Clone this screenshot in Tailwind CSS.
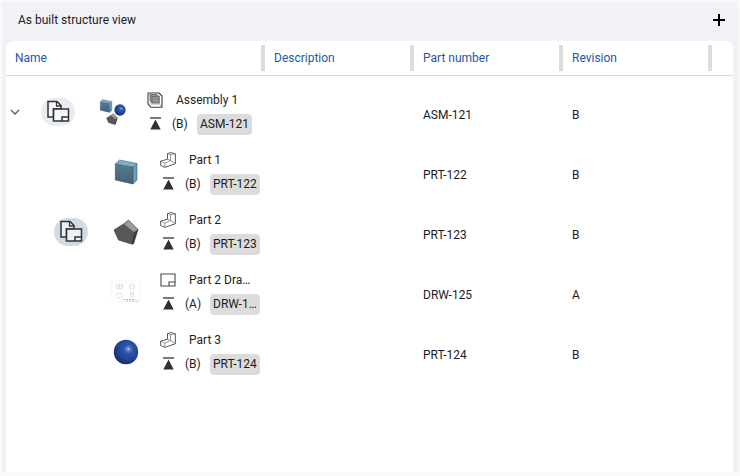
<!DOCTYPE html>
<html lang="en">
<head>
<meta charset="utf-8">
<meta name="viewport" content="width=device-width, initial-scale=1">
<title>As built structure view</title>
<script src="https://cdn.jsdelivr.net/npm/@tailwindcss/browser@4"></script>
</head>
<body class="bg-[#fafafc] font-[Roboto,sans-serif] text-xs leading-5 text-[#1c1c1e]">

<svg class="absolute size-0" aria-hidden="true">
  <defs>
    <linearGradient id="steel" x1="0" y1="0" x2="0" y2="1"><stop offset="0" stop-color="#527d91"/><stop offset="1" stop-color="#456475"/></linearGradient>
    <radialGradient id="ball" cx=".6" cy=".38" r=".65"><stop offset="0" stop-color="#c4d4f5"/><stop offset=".12" stop-color="#5a7cc8"/><stop offset=".3" stop-color="#2c52a6"/><stop offset=".65" stop-color="#234495"/><stop offset="1" stop-color="#14285c"/></radialGradient>
  </defs>
  <symbol id="copy" viewBox="0 0 24 24">
    <path d="M7.500 17H2V1.500h9l4 4V9H7.500z" fill="#fff" fill-opacity=".6" stroke="#303236" stroke-width="1.500"/>
    <path d="M10.500 1.500V6H15" fill="none" stroke="#303236" stroke-width="1.300"/>
    <path d="M7.500 9h15v12h-15z" fill="#fff" fill-opacity=".6" stroke="#303236" stroke-width="1.500"/>
    <path d="M16 21v-4h6.500" fill="none" stroke="#303236" stroke-width="1.500"/>
  </symbol>
  <symbol id="latest" viewBox="0 0 14 14">
    <path d="M2 1h11" stroke="#303033" stroke-width="1.300"/>
    <path d="M7.500 2.600 12.700 12.600H2.300z" fill="#303033"/>
  </symbol>
  <symbol id="assembly" viewBox="0 0 16 16">
    <path d="M1 1h11l3 3v11.300H4L1 12z" fill="#fff" stroke="#3c3c3e" stroke-width="1.100" stroke-linejoin="round"/>
    <path d="M1.500 12h11M12.500 12 15 15M12.500 3.500V12" stroke="#7a7a7c" stroke-width=".6" fill="none"/>
    <path d="M3 2.500h7l2 2V11H5L3 9z" fill="#929294" stroke="#4a4a4c" stroke-width=".6"/>
    <path d="M3 2.500l2 2h7M5 4.500V11" stroke="#5a5a5c" stroke-width=".6" fill="none"/>
  </symbol>
  <symbol id="part" viewBox="0 0 16 16">
    <path d="M7.500 1.500 11 .6l4.400 1.200v9.900L4.800 15.400.6 13.300V9.200l6.900-2z" fill="#fff" stroke="#48484a" stroke-width=".9" stroke-linejoin="round"/>
    <path d="M7.500 1.500l3 1.200 4.900-.9M10.500 2.700v5.800L4.800 11.200.6 9.200M4.800 11.200v4.200M7.500 7.200l3 1.300 4.900 3" fill="none" stroke="#6a6a6c" stroke-width=".7" stroke-linejoin="round"/>
  </symbol>
  <symbol id="drawing" viewBox="0 0 16 16">
    <path d="M1 2h14v12H1zM9 14V10h6" fill="none" stroke="#48484a" stroke-width="1.100"/>
  </symbol>
  <symbol id="block" viewBox="0 0 26 26">
    <path d="M20 8l4-3.500V21l-4 4z" fill="#6b9fbd"/>
    <path d="M2.300 5 6.500 1 24 4.500 20 8z" fill="#7db0cc"/>
    <path d="M2.300 5 20 8v17L2.300 21z" fill="url(#steel)"/>
    <path d="M2.300 5 6.500 1 24 4.500V21l-4 4L2.300 21zM2.300 5 20 8l4-3.500M20 8v17" fill="none" stroke="#2b4350" stroke-width=".5"/>
  </symbol>
  <symbol id="penta" viewBox="0 0 26 26">
    <path d="M1 11 10.500 5 21 13.500 18.500 25 5.500 21z" fill="#585858"/>
    <path d="M10.500 5 15.500 1 25 10.500l-4 3z" fill="#9a9a9a"/>
    <path d="M21 13.500l4-3L20.500 25h-2z" fill="#3c3c3c"/>
    <path d="M1 11 10.500 5l5-4L25 10.500 20.500 25h-2l-13-4zM10.500 5 21 13.500l4-3M21 13.500 18.500 25" fill="none" stroke="#303030" stroke-width=".6"/>
  </symbol>
  <symbol id="sphere" viewBox="0 0 26 26"><circle cx="13" cy="13" r="12.200" fill="url(#ball)"/></symbol>
</svg>

<main class="mx-0.5 mt-0.5 mb-1 flex min-h-[calc(100vh-6px)] flex-col bg-[#f2f1f6] px-1">
  <header class="flex h-[39px] shrink-0 items-center justify-between pr-[7px] pb-1 pl-3">
    <h1>As built structure view</h1>
    <button type="button" aria-label="Add" class="flex size-4 items-center justify-center">
      <svg class="size-3" viewBox="0 0 12 12" fill="none" stroke="#000" stroke-width="2"><path d="M6 0v12M0 6h12"/></svg>
    </button>
  </header>

  <section class="mr-px grow rounded-t-lg bg-white">
    <table class="w-full table-fixed border-separate border-spacing-0 text-left">
      <colgroup><col class="w-[259px]"><col class="w-[149px]"><col class="w-[149px]"><col class="w-[149px]"><col></colgroup>
      <thead class="text-[#27569b]">
        <tr>
          <th class="h-[35px] border-b border-[#d8d8da] p-0 pl-[9px] font-normal"><div class="flex items-center justify-between">Name<span class="h-[26px] w-1 bg-[#dcdcdc]"></span></div></th>
          <th class="border-b border-[#d8d8da] p-0 pl-[9px] font-normal"><div class="flex items-center justify-between">Description<span class="h-[26px] w-1 bg-[#dcdcdc]"></span></div></th>
          <th class="border-b border-[#d8d8da] p-0 pl-[9px] font-normal"><div class="flex items-center justify-between">Part number<span class="h-[26px] w-1 bg-[#dcdcdc]"></span></div></th>
          <th class="border-b border-[#d8d8da] p-0 pl-[9px] font-normal"><div class="flex items-center justify-between">Revision<span class="h-[26px] w-1 bg-[#dcdcdc]"></span></div></th>
          <td class="border-b border-[#d8d8da] p-0"></td>
        </tr>
      </thead>
      <tbody>
        <tr><td colspan="5" class="h-[9px] p-0"></td></tr>
        <tr class="h-[60px]">
          <td class="p-0 align-top">
            <div class="flex h-[54px] items-center pl-1">
              <button type="button" aria-label="Collapse Assembly 1" class="mr-[21px] flex w-[10px] justify-center"><svg class="h-[10px] w-[10px]" viewBox="0 0 10 10" fill="none" stroke="#55585c" stroke-width="1.300"><path d="M1 3l4 4 4-4"/></svg></button>
              <button type="button" aria-label="Copy Assembly 1" class="flex h-7 w-[34px] items-center justify-center rounded-full bg-[#e9edf2]"><svg class="size-6"><use href="#copy"/></svg></button>
              <svg class="ml-6 h-[26px] w-7" viewBox="0 0 28 26">
                <use href="#block" x="0" y="0" width="14" height="14"/>
                <use href="#penta" x="7" y="14" width="12" height="12"/>
                <use href="#sphere" x="15" y="5" width="12" height="12"/>
              </svg>
              <div class="ml-5 flex flex-col gap-1">
                <div class="flex items-center gap-[13px]"><svg class="size-4"><use href="#assembly"/></svg><span>Assembly 1</span></div>
                <div class="flex items-center gap-[9px]"><svg class="mr-px ml-px size-[14px]"><use href="#latest"/></svg><span class="w-4">(B)</span><span class="h-[21px] rounded-sm bg-[#dcdcdc] px-[3px]">ASM-121</span></div>
              </div>
            </div>
          </td>
          <td class="p-0 pl-[9px]"></td><td class="p-0 pl-[9px]">ASM-121</td><td class="p-0 pl-[9px]">B</td><td></td>
        </tr>
        <tr class="h-[60px]">
          <td class="p-0 align-top">
            <div class="flex h-[54px] items-center pl-[107px]">
              <svg class="size-[26px]"><use href="#block"/></svg>
              <div class="ml-[21px] flex flex-col gap-1">
                <div class="flex items-center gap-[13px]"><svg class="size-4"><use href="#part"/></svg><span>Part 1</span></div>
                <div class="flex items-center gap-[9px]"><svg class="mr-px ml-px size-[14px]"><use href="#latest"/></svg><span class="w-4">(B)</span><span class="h-[21px] rounded-sm bg-[#dcdcdc] px-[3px]">PRT-122</span></div>
              </div>
            </div>
          </td>
          <td class="p-0 pl-[9px]"></td><td class="p-0 pl-[9px]">PRT-122</td><td class="p-0 pl-[9px]">B</td><td></td>
        </tr>
        <tr class="h-[60px]">
          <td class="p-0 align-top">
            <div class="flex h-[54px] items-center pl-12">
              <button type="button" aria-label="Copy Part 2" class="mr-[25px] flex h-7 w-[34px] items-center justify-center rounded-full bg-[#cfdbe5]"><svg class="size-6"><use href="#copy"/></svg></button>
              <svg class="size-[26px]"><use href="#penta"/></svg>
              <div class="ml-[21px] flex flex-col gap-1">
                <div class="flex items-center gap-[13px]"><svg class="size-4"><use href="#part"/></svg><span>Part 2</span></div>
                <div class="flex items-center gap-[9px]"><svg class="mr-px ml-px size-[14px]"><use href="#latest"/></svg><span class="w-4">(B)</span><span class="h-[21px] rounded-sm bg-[#dcdcdc] px-[3px]">PRT-123</span></div>
              </div>
            </div>
          </td>
          <td class="p-0 pl-[9px]"></td><td class="p-0 pl-[9px]">PRT-123</td><td class="p-0 pl-[9px]">B</td><td></td>
        </tr>
        <tr class="h-[60px]">
          <td class="p-0 align-top">
            <div class="flex h-[54px] items-center pl-[105px]">
              <svg class="h-[26px] w-[30px]" viewBox="0 0 30 26" fill="none" stroke="#d0d0d2" stroke-width=".6">
                <path d="M1 2h28v21H1z" stroke="#e6e6e7" stroke-dasharray="2 1"/>
                <path d="M5.500 5.500h6v4h-6zM5.500 7.500h6M8.500 5.500v4"/>
                <circle cx="21" cy="7.500" r="2.700"/><path d="M19 5.500l4 4"/>
                <path d="M7 14h3l2 2.500-2 2.500H7l-2-2.500z"/>
                <path d="M19.500 13h3v5h-3zM19.500 15.500h3"/>
                <path d="M12 20.500h11M15 22h13" stroke="#b4b4b6" stroke-width=".9" stroke-dasharray="2 1"/>
              </svg>
              <div class="ml-[19px] flex flex-col gap-1">
                <div class="flex items-center gap-[13px]"><svg class="size-4"><use href="#drawing"/></svg><span>Part 2 Dra…</span></div>
                <div class="flex items-center gap-[9px]"><svg class="mr-px ml-px size-[14px]"><use href="#latest"/></svg><span class="w-4">(A)</span><span class="h-[21px] rounded-sm bg-[#dcdcdc] px-[3px]">DRW-1…</span></div>
              </div>
            </div>
          </td>
          <td class="p-0 pl-[9px]"></td><td class="p-0 pl-[9px]">DRW-125</td><td class="p-0 pl-[9px]">A</td><td></td>
        </tr>
        <tr class="h-[60px]">
          <td class="p-0 align-top">
            <div class="flex h-[54px] items-center pl-[107px]">
              <svg class="size-[26px]"><use href="#sphere"/></svg>
              <div class="ml-[21px] flex flex-col gap-1">
                <div class="flex items-center gap-[13px]"><svg class="size-4"><use href="#part"/></svg><span>Part 3</span></div>
                <div class="flex items-center gap-[9px]"><svg class="mr-px ml-px size-[14px]"><use href="#latest"/></svg><span class="w-4">(B)</span><span class="h-[21px] rounded-sm bg-[#dcdcdc] px-[3px]">PRT-124</span></div>
              </div>
            </div>
          </td>
          <td class="p-0 pl-[9px]"></td><td class="p-0 pl-[9px]">PRT-124</td><td class="p-0 pl-[9px]">B</td><td></td>
        </tr>
      </tbody>
    </table>
  </section>
</main>
</body>
</html>
